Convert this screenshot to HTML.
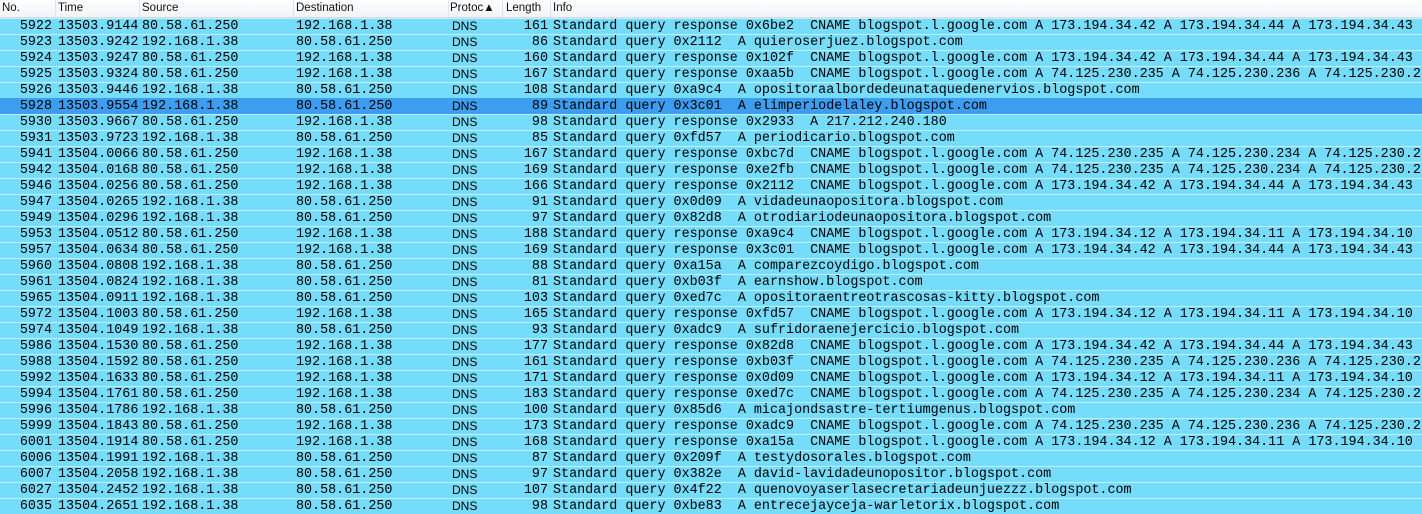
<!DOCTYPE html><html><head><meta charset="utf-8"><style>
body{margin:0;width:1422px;height:514px;overflow:hidden;background:#fff;font-family:"Liberation Mono",monospace;}
.h{position:relative;height:18px;background:linear-gradient(#fff,#f1f3f6);border-bottom:1px solid #d5d9de;box-sizing:border-box;font:11.5px "Liberation Sans",sans-serif;color:#111}
.h span{position:absolute;top:2px;white-space:nowrap}
.h i{position:absolute;top:0;width:1px;height:17px;background:#e0e3e8}
.r{position:relative;height:16px;background:#76dcfb;border-top:1px solid #c6effd;box-sizing:border-box;font-size:13.4px;line-height:15px;color:#000;white-space:pre}
.r.s{background:#3d9df1;border-top-color:#3d9df1}
.r span{position:absolute;top:0;overflow:hidden;white-space:pre}
.a{left:0;width:52px;text-align:right}
.b{left:58px;width:83px}
.c{left:142px;width:150px}
.d{left:296px;width:150px}
.r span.e{left:452px;width:50px;font:12px "Liberation Sans",sans-serif;top:0;line-height:15px}
.f{left:500px;width:48px;text-align:right}
.g{left:553px;width:870px}
</style></head><body>
<div class="h"><span style="left:2px">No.</span><i style="left:55px"></i><span style="left:58px">Time</span><i style="left:139px"></i><span style="left:142px">Source</span><i style="left:293px"></i><span style="left:296px">Destination</span><i style="left:448px"></i><span style="left:450px">Protoc▲</span><i style="left:502px"></i><span style="left:506px">Length</span><i style="left:550px"></i><span style="left:553px">Info</span></div>
<div class="r"><span class="a">5922</span><span class="b">13503.9144</span><span class="c">80.58.61.250</span><span class="d">192.168.1.38</span><span class="e">DNS</span><span class="f">161</span><span class="g">Standard query response 0x6be2  CNAME blogspot.l.google.com A 173.194.34.42 A 173.194.34.44 A 173.194.34.43</span></div>
<div class="r"><span class="a">5923</span><span class="b">13503.9242</span><span class="c">192.168.1.38</span><span class="d">80.58.61.250</span><span class="e">DNS</span><span class="f">86</span><span class="g">Standard query 0x2112  A quieroserjuez.blogspot.com</span></div>
<div class="r"><span class="a">5924</span><span class="b">13503.9247</span><span class="c">80.58.61.250</span><span class="d">192.168.1.38</span><span class="e">DNS</span><span class="f">160</span><span class="g">Standard query response 0x102f  CNAME blogspot.l.google.com A 173.194.34.42 A 173.194.34.44 A 173.194.34.43</span></div>
<div class="r"><span class="a">5925</span><span class="b">13503.9324</span><span class="c">80.58.61.250</span><span class="d">192.168.1.38</span><span class="e">DNS</span><span class="f">167</span><span class="g">Standard query response 0xaa5b  CNAME blogspot.l.google.com A 74.125.230.235 A 74.125.230.236 A 74.125.230.2</span></div>
<div class="r"><span class="a">5926</span><span class="b">13503.9446</span><span class="c">192.168.1.38</span><span class="d">80.58.61.250</span><span class="e">DNS</span><span class="f">108</span><span class="g">Standard query 0xa9c4  A opositoraalbordedeunataquedenervios.blogspot.com</span></div>
<div class="r s"><span class="a">5928</span><span class="b">13503.9554</span><span class="c">192.168.1.38</span><span class="d">80.58.61.250</span><span class="e">DNS</span><span class="f">89</span><span class="g">Standard query 0x3c01  A elimperiodelaley.blogspot.com</span></div>
<div class="r"><span class="a">5930</span><span class="b">13503.9667</span><span class="c">80.58.61.250</span><span class="d">192.168.1.38</span><span class="e">DNS</span><span class="f">98</span><span class="g">Standard query response 0x2933  A 217.212.240.180</span></div>
<div class="r"><span class="a">5931</span><span class="b">13503.9723</span><span class="c">192.168.1.38</span><span class="d">80.58.61.250</span><span class="e">DNS</span><span class="f">85</span><span class="g">Standard query 0xfd57  A periodicario.blogspot.com</span></div>
<div class="r"><span class="a">5941</span><span class="b">13504.0066</span><span class="c">80.58.61.250</span><span class="d">192.168.1.38</span><span class="e">DNS</span><span class="f">167</span><span class="g">Standard query response 0xbc7d  CNAME blogspot.l.google.com A 74.125.230.235 A 74.125.230.234 A 74.125.230.2</span></div>
<div class="r"><span class="a">5942</span><span class="b">13504.0168</span><span class="c">80.58.61.250</span><span class="d">192.168.1.38</span><span class="e">DNS</span><span class="f">169</span><span class="g">Standard query response 0xe2fb  CNAME blogspot.l.google.com A 74.125.230.235 A 74.125.230.234 A 74.125.230.2</span></div>
<div class="r"><span class="a">5946</span><span class="b">13504.0256</span><span class="c">80.58.61.250</span><span class="d">192.168.1.38</span><span class="e">DNS</span><span class="f">166</span><span class="g">Standard query response 0x2112  CNAME blogspot.l.google.com A 173.194.34.42 A 173.194.34.44 A 173.194.34.43</span></div>
<div class="r"><span class="a">5947</span><span class="b">13504.0265</span><span class="c">192.168.1.38</span><span class="d">80.58.61.250</span><span class="e">DNS</span><span class="f">91</span><span class="g">Standard query 0x0d09  A vidadeunaopositora.blogspot.com</span></div>
<div class="r"><span class="a">5949</span><span class="b">13504.0296</span><span class="c">192.168.1.38</span><span class="d">80.58.61.250</span><span class="e">DNS</span><span class="f">97</span><span class="g">Standard query 0x82d8  A otrodiariodeunaopositora.blogspot.com</span></div>
<div class="r"><span class="a">5953</span><span class="b">13504.0512</span><span class="c">80.58.61.250</span><span class="d">192.168.1.38</span><span class="e">DNS</span><span class="f">188</span><span class="g">Standard query response 0xa9c4  CNAME blogspot.l.google.com A 173.194.34.12 A 173.194.34.11 A 173.194.34.10</span></div>
<div class="r"><span class="a">5957</span><span class="b">13504.0634</span><span class="c">80.58.61.250</span><span class="d">192.168.1.38</span><span class="e">DNS</span><span class="f">169</span><span class="g">Standard query response 0x3c01  CNAME blogspot.l.google.com A 173.194.34.42 A 173.194.34.44 A 173.194.34.43</span></div>
<div class="r"><span class="a">5960</span><span class="b">13504.0808</span><span class="c">192.168.1.38</span><span class="d">80.58.61.250</span><span class="e">DNS</span><span class="f">88</span><span class="g">Standard query 0xa15a  A comparezcoydigo.blogspot.com</span></div>
<div class="r"><span class="a">5961</span><span class="b">13504.0824</span><span class="c">192.168.1.38</span><span class="d">80.58.61.250</span><span class="e">DNS</span><span class="f">81</span><span class="g">Standard query 0xb03f  A earnshow.blogspot.com</span></div>
<div class="r"><span class="a">5965</span><span class="b">13504.0911</span><span class="c">192.168.1.38</span><span class="d">80.58.61.250</span><span class="e">DNS</span><span class="f">103</span><span class="g">Standard query 0xed7c  A opositoraentreotrascosas-kitty.blogspot.com</span></div>
<div class="r"><span class="a">5972</span><span class="b">13504.1003</span><span class="c">80.58.61.250</span><span class="d">192.168.1.38</span><span class="e">DNS</span><span class="f">165</span><span class="g">Standard query response 0xfd57  CNAME blogspot.l.google.com A 173.194.34.12 A 173.194.34.11 A 173.194.34.10</span></div>
<div class="r"><span class="a">5974</span><span class="b">13504.1049</span><span class="c">192.168.1.38</span><span class="d">80.58.61.250</span><span class="e">DNS</span><span class="f">93</span><span class="g">Standard query 0xadc9  A sufridoraenejercicio.blogspot.com</span></div>
<div class="r"><span class="a">5986</span><span class="b">13504.1530</span><span class="c">80.58.61.250</span><span class="d">192.168.1.38</span><span class="e">DNS</span><span class="f">177</span><span class="g">Standard query response 0x82d8  CNAME blogspot.l.google.com A 173.194.34.42 A 173.194.34.44 A 173.194.34.43</span></div>
<div class="r"><span class="a">5988</span><span class="b">13504.1592</span><span class="c">80.58.61.250</span><span class="d">192.168.1.38</span><span class="e">DNS</span><span class="f">161</span><span class="g">Standard query response 0xb03f  CNAME blogspot.l.google.com A 74.125.230.235 A 74.125.230.236 A 74.125.230.2</span></div>
<div class="r"><span class="a">5992</span><span class="b">13504.1633</span><span class="c">80.58.61.250</span><span class="d">192.168.1.38</span><span class="e">DNS</span><span class="f">171</span><span class="g">Standard query response 0x0d09  CNAME blogspot.l.google.com A 173.194.34.12 A 173.194.34.11 A 173.194.34.10</span></div>
<div class="r"><span class="a">5994</span><span class="b">13504.1761</span><span class="c">80.58.61.250</span><span class="d">192.168.1.38</span><span class="e">DNS</span><span class="f">183</span><span class="g">Standard query response 0xed7c  CNAME blogspot.l.google.com A 74.125.230.235 A 74.125.230.234 A 74.125.230.2</span></div>
<div class="r"><span class="a">5996</span><span class="b">13504.1786</span><span class="c">192.168.1.38</span><span class="d">80.58.61.250</span><span class="e">DNS</span><span class="f">100</span><span class="g">Standard query 0x85d6  A micajondsastre-tertiumgenus.blogspot.com</span></div>
<div class="r"><span class="a">5999</span><span class="b">13504.1843</span><span class="c">80.58.61.250</span><span class="d">192.168.1.38</span><span class="e">DNS</span><span class="f">173</span><span class="g">Standard query response 0xadc9  CNAME blogspot.l.google.com A 74.125.230.235 A 74.125.230.236 A 74.125.230.2</span></div>
<div class="r"><span class="a">6001</span><span class="b">13504.1914</span><span class="c">80.58.61.250</span><span class="d">192.168.1.38</span><span class="e">DNS</span><span class="f">168</span><span class="g">Standard query response 0xa15a  CNAME blogspot.l.google.com A 173.194.34.12 A 173.194.34.11 A 173.194.34.10</span></div>
<div class="r"><span class="a">6006</span><span class="b">13504.1991</span><span class="c">192.168.1.38</span><span class="d">80.58.61.250</span><span class="e">DNS</span><span class="f">87</span><span class="g">Standard query 0x209f  A testydosorales.blogspot.com</span></div>
<div class="r"><span class="a">6007</span><span class="b">13504.2058</span><span class="c">192.168.1.38</span><span class="d">80.58.61.250</span><span class="e">DNS</span><span class="f">97</span><span class="g">Standard query 0x382e  A david-lavidadeunopositor.blogspot.com</span></div>
<div class="r"><span class="a">6027</span><span class="b">13504.2452</span><span class="c">192.168.1.38</span><span class="d">80.58.61.250</span><span class="e">DNS</span><span class="f">107</span><span class="g">Standard query 0x4f22  A quenovoyaserlasecretariadeunjuezzz.blogspot.com</span></div>
<div class="r"><span class="a">6035</span><span class="b">13504.2651</span><span class="c">192.168.1.38</span><span class="d">80.58.61.250</span><span class="e">DNS</span><span class="f">98</span><span class="g">Standard query 0xbe83  A entrecejayceja-warletorix.blogspot.com</span></div>
</body></html>
